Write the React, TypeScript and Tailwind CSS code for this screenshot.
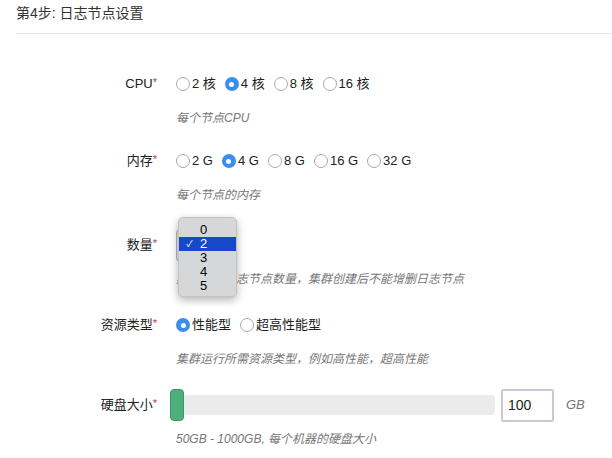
import React from 'react'

const font = { fontFamily: '"Liberation Sans", "Noto Sans CJK SC", sans-serif' }

function Radio({ label, checked }: { label: string, checked?: boolean }) {
  return (
    <label className="flex items-center mr-[9px]">
      {checked ? (
        <span className="w-[14px] h-[14px] rounded-full bg-[#3b8ef0] flex items-center justify-center">
          <span className="w-[5px] h-[5px] rounded-full bg-white" />
        </span>
      ) : (
        <span className="w-[14px] h-[14px] rounded-full border border-[#aaaaaa] bg-white" />
      )}
      <span className="ml-[2px] text-[13px] text-[#222]">{label}</span>
    </label>
  )
}

function Field({ label, help, mb, children }: { label: string, help: string, mb: string, children: React.ReactNode }) {
  return (
    <div className={mb}>
      <div className="flex items-center h-[34px]">
        <div className="w-[157px] text-right text-[13px] text-[#222]">
          {label}<span className="text-[#a94442] text-[11px] align-top">*</span>
        </div>
        <div className="ml-[19px] flex items-center h-full">{children}</div>
      </div>
      <div className="ml-[176px] mt-[8px] leading-[18px] text-[12px] italic text-[#777]">{help}</div>
    </div>
  )
}

export default function App() {
  return (
    <div className="w-[612px] h-[458px] bg-white overflow-hidden" style={font}>
      <div className="pl-[16px] pt-[4px]">
        <div className="text-[14px] text-[#333] leading-[18px]">第4步: 日志节点设置</div>
        <div className="mt-[11px] border-t border-[#e6e6e6]" />
      </div>
      <div className="mt-[33px]">
        <Field label="CPU" help="每个节点CPU" mb="mb-[17px]">
          <Radio label="2 核" />
          <Radio label="4 核" checked />
          <Radio label="8 核" />
          <Radio label="16 核" />
        </Field>
        <Field label="内存" help="每个节点的内存" mb="mb-[24px]">
          <Radio label="2 G" />
          <Radio label="4 G" checked />
          <Radio label="8 G" />
          <Radio label="16 G" />
          <Radio label="32 G" />
        </Field>
        <Field label="数量" help="集群中的日志节点数量，集群创建后不能增删日志节点" mb="mb-[20px]">
          <div className="relative w-[61px] h-[33px] rounded-[4px] border border-[#b4b4b4] bg-[#e8e8e8]">
            <div className="absolute left-[1px] top-[-13px] w-[59px] h-[80px] rounded-[5px] bg-[#d6d7d9] border border-[#c2c2c4] shadow-[0_3px_8px_rgba(0,0,0,0.3)] pt-[5px] text-[13px] leading-[14px] text-black z-10">
              {['0', '2', '3', '4', '5'].map(v => (
                <div
                  key={v}
                  className={'flex items-center h-[14px] ' + (v === '2' ? 'bg-[#1649c9] text-white' : '')}
                >
                  <span className="w-[21px] text-center text-[9px]">{v === '2' ? '✓' : ''}</span>
                  <span>{v}</span>
                </div>
              ))}
            </div>
          </div>
        </Field>
        <Field label="资源类型" help="集群运行所需资源类型，例如高性能，超高性能" mb="mb-[20px]">
          <Radio label="性能型" checked />
          <Radio label="超高性能型" />
        </Field>
        <Field label="硬盘大小" help="50GB - 1000GB, 每个机器的硬盘大小" mb="mb-[20px]">
          <div className="relative w-[319px] h-[20px] rounded-[3px] bg-[#ebebeb]">
            <div className="absolute left-[-6px] top-[-6px] w-[14px] h-[32px] rounded-[4px] bg-[#4daf7c] border border-[#3e9466]" />
          </div>
          <div className="ml-[6px] w-[53px] h-[33px] rounded-[2px] border-2 border-[#cbc8dc] flex items-center pl-[5px] text-[14px] text-[#222]">100</div>
          <span className="ml-[12px] text-[13px] italic text-[#777]">GB</span>
        </Field>
      </div>
    </div>
  )
}
